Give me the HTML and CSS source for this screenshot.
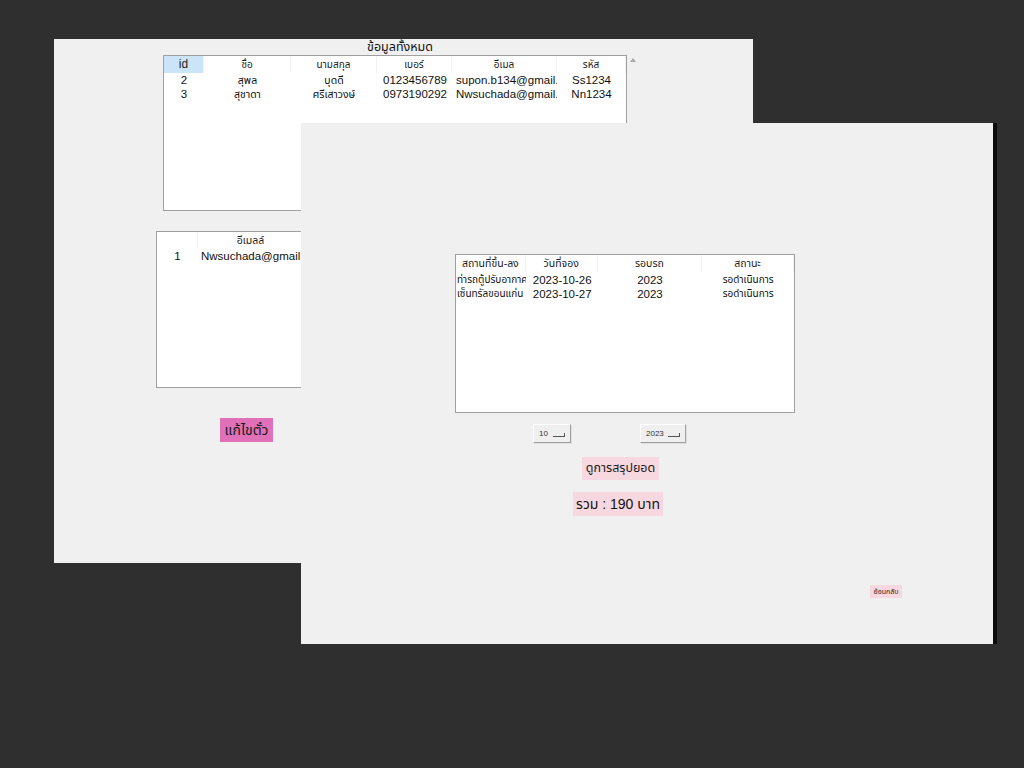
FILE: index.html
```html
<!DOCTYPE html>
<html lang="th">
<head>
<meta charset="utf-8">
<title>ข้อมูลทั้งหมด</title>
<link rel="stylesheet" href="styles.css">
</head>
<body>
<div class="desktop">
  <section class="win win-back">
    <div class="back-top">
      <div class="top-col">
        <div class="title">ข้อมูลทั้งหมด</div>
        <div class="grid grid-users">
          <div class="hdr">
            <span class="c-id sel">id</span>
            <span class="c-name th">ชื่อ</span>
            <span class="c-last th">นามสกุล</span>
            <span class="c-tel th">เบอร์</span>
            <span class="c-mail th">อีเมล</span>
            <span class="c-code th">รหัส</span>
          </div>
          <div class="row">
            <span class="c-id">2</span>
            <span class="c-name th">สุพล</span>
            <span class="c-last th">บุดดี</span>
            <span class="c-tel">0123456789</span>
            <span class="c-mail left">supon.b134@gmail.com</span>
            <span class="c-code">Ss1234</span>
          </div>
          <div class="row">
            <span class="c-id">3</span>
            <span class="c-name th">สุชาดา</span>
            <span class="c-last th">ศรีเสาวงษ์</span>
            <span class="c-tel">0973190292</span>
            <span class="c-mail left">Nwsuchada@gmail.com</span>
            <span class="c-code">Nn1234</span>
          </div>
        </div>
      </div>
      <div class="scroll-up"></div>
    </div>
    <div class="grid grid-mail">
      <div class="hdr">
        <span class="m-no"></span>
        <span class="m-mail th">อีเมลล์</span>
      </div>
      <div class="row">
        <span class="m-no">1</span>
        <span class="m-mail left">Nwsuchada@gmail.com</span>
      </div>
    </div>
    <button class="btn-edit">แก้ไขตั๋ว</button>
  </section>

  <section class="win win-front">
    <div class="grid grid-book">
      <div class="hdr">
        <span class="b-place th">สถานที่ขึ้น-ลง</span>
        <span class="b-date th">วันที่จอง</span>
        <span class="b-round th">รอบรถ</span>
        <span class="b-status th">สถานะ</span>
      </div>
      <div class="row">
        <span class="b-place th left">ท่ารถตู้ปรับอากาศ</span>
        <span class="b-date">2023-10-26</span>
        <span class="b-round">2023</span>
        <span class="b-status th">รอดำเนินการ</span>
      </div>
      <div class="row">
        <span class="b-place th left">เซ็นทรัลขอนแก่น</span>
        <span class="b-date">2023-10-27</span>
        <span class="b-round">2023</span>
        <span class="b-status th">รอดำเนินการ</span>
      </div>
    </div>
    <div class="selects">
      <div class="combo combo-month"><span>10</span><i class="arrow"></i></div>
      <div class="combo combo-year"><span>2023</span><i class="arrow"></i></div>
    </div>
    <button class="btn-sum">ดูการสรุปยอด</button>
    <div class="total">รวม : 190 บาท</div>
    <div class="back-row"><button class="btn-back">ย้อนกลับ</button></div>
  </section>
</div>
</body>
</html>
```
FILE: styles.css
```css
* { box-sizing: border-box; }
html, body { margin: 0; padding: 0; }
body {
  width: 1024px;
  height: 768px;
  background: #2f2f2f;
  font-family: "Liberation Sans", Arial, "Noto Sans Thai", "Noto Sans", sans-serif;
  color: #111;
  overflow: hidden;
}
.desktop { position: relative; width: 1024px; height: 768px; }

.win {
  position: absolute;
  background: #f0f0f0;
}
.win-back {
  left: 54px; top: 39px; width: 699px; height: 524px;
  display: flex; flex-direction: column; align-items: flex-start;
  padding-left: 102px;
}
.win-front {
  left: 301px; top: 123px; width: 696px; height: 521px;
  border-right: 4px solid #0c0c0c;
  display: flex; flex-direction: column; align-items: flex-start;
  padding-top: 131px; padding-left: 154px;
}

/* back window */
.back-top { display: flex; align-items: flex-start; margin-left: 7px; }
.top-col { display: flex; flex-direction: column; align-items: center; }
.title {
  height: 16px; line-height: 15px; font-size: 12.5px; color: #111;
  padding: 1px 0 0 10px;
}
.scroll-up {
  width: 0; height: 0; margin: 19px 0 0 3px;
  border-left: 3px solid transparent; border-right: 3px solid transparent;
  border-bottom: 4px solid #a8a8a8;
}

.grid {
  background: #fff;
  border: 1px solid #a0a0a0;
  display: flex; flex-direction: column;
}
.hdr, .row { display: flex; }
.hdr { height: 17px; align-items: center; }
.hdr span {
  height: 17px; line-height: 17px; font-size: 10px; color: #222;
  border-right: 1px solid #f2f2f2; text-align: center;
  white-space: nowrap; overflow: hidden;
}
.hdr span.sel { background: #cce4f7; font-size: 12px; }
.row span {
  height: 14px; line-height: 14px; font-size: 11.5px; text-align: center;
  white-space: nowrap; overflow: hidden; text-overflow: clip; color: #111;
}
.row span.th { font-size: 10.5px; }
.row span.left { text-align: left; padding-left: 4px; }

.grid-users { width: 464px; height: 156px; }
.c-id { width: 40px; }
.c-name { width: 87px; }
.c-last { width: 86px; }
.c-tel { width: 75px; }
.c-mail { width: 105px; }
.c-code { width: 69px; }
.grid-users .row .c-tel { text-align: right; padding-right: 5px; }
.grid-users .row .c-mail { padding-left: 4px; padding-right: 2px; }

.grid-mail { width: 200px; height: 157px; margin-top: 20px; border-right: none; }
.m-no { width: 41px; }
.m-mail { width: 106px; }
.grid-mail .row .m-mail { padding-left: 3px; }
.grid-mail .hdr span { font-size: 10.5px; }

.btn-edit {
  margin: 30px 0 0 64px;
  width: 53px; height: 24px; padding: 0;
  border: none; background: #e070b8; color: #1a1a1a;
  font-family: inherit; font-size: 14px; line-height: 24px;
}

/* front window */
.grid-book { width: 340px; height: 159px; }
.b-place { width: 70px; }
.b-date { width: 72px; }
.b-round { width: 105px; }
.b-status { width: 92px; }
.grid-book .hdr span { font-size: 10.5px; }
.grid-book .row span.b-place { padding-left: 1px; font-size: 10px; }
.grid-book .row span.b-status { font-size: 10px; }
.grid-book .row span.b-date { text-align: left; padding-left: 7px; }
.grid-book .row span.b-round { padding-left: 0; }
.grid-book .row:nth-child(2) { margin-top: 1px; }

.selects { display: flex; gap: 69px; margin: 11px 0 0 78px; }
.combo {
  height: 19px; background: #efefef;
  border: 1px solid; border-color: #ffffff #a0a0a0 #a0a0a0 #ffffff;
  box-shadow: 1px 1px 0 #e0e0e0;
  display: flex; align-items: center; justify-content: space-between;
  padding: 0 5px 0 5px;
  font-size: 8px; color: #333;
}
.combo-month { width: 38px; }
.combo-year { width: 46px; }
.arrow {
  display: block; width: 12px; height: 4px; margin-top: 2px;
  border-bottom: 1px solid #555; border-right: 1px solid #555;
}

.btn-sum {
  margin: 14px 0 0 127px;
  width: 77px; height: 23px; padding: 0;
  border: none; background: #f8d8e0; color: #1a1a1a;
  font-family: inherit; font-size: 12.5px; line-height: 23px;
}
.total {
  margin: 12px 0 0 118px;
  width: 90px; height: 24px; line-height: 24px;
  background: #f8d8e0; text-align: center;
  font-size: 14px; color: #111;
}
.back-row { margin: 69px 0 0 415px; }
.btn-back {
  display: block; width: 32px; height: 13px; padding: 0;
  border: none; background: #f8d8e0; color: #222;
  font-family: inherit; font-size: 7px; line-height: 13px;
}
```
